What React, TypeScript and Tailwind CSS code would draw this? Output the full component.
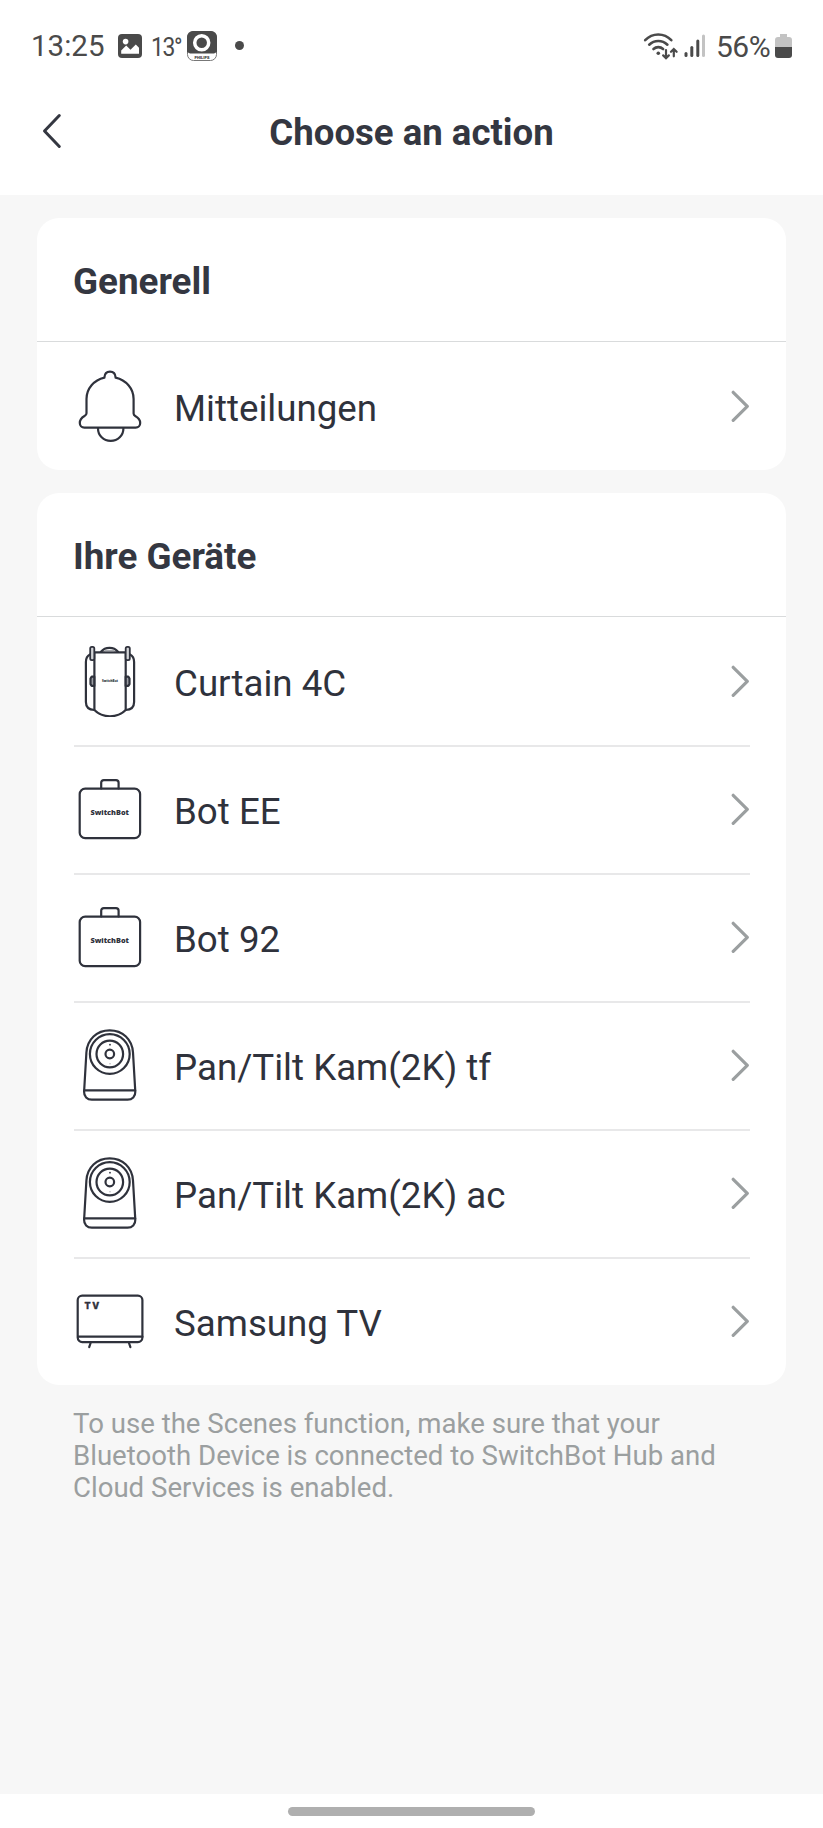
import type { ReactNode } from "react";

type RowProps = {
  icon: ReactNode;
  label: string;
  first?: boolean;
};

type Device = {
  label: string;
  icon: ReactNode;
};

function IconBox({ children }: { children: ReactNode }) {
  return (
    <svg
      viewBox="0 0 72 72"
      className="h-[72px] w-[72px] shrink-0"
      fill="none"
      stroke="#2f323c"
      strokeWidth="2.2"
      strokeLinecap="round"
      strokeLinejoin="round"
    >
      {children}
    </svg>
  );
}

function BellIcon() {
  return (
    <IconBox>
      <path d="M30.4 7.6C30.6 3.6 33 1.6 36 1.6s5.4 2 5.6 6C52 10 59.6 18.5 59.6 29v14.6c0 1.2.5 1.8 1.6 2.4 3.2 1.8 5 3.8 5 7 0 2.7-1.800 4.700-4.600 4.700H10.400c-2.800 0-4.600-2-4.600-4.700 0-3.200 1.500-5.200 4.700-7 1.300-.7 2-1.500 2-2.800V29C12.500 18.500 20 10 30.400 7.600Z" />
      <path d="M24 58.400c0 7 5.500 12.400 12.700 12.400s12.700-5.400 12.700-12.400" />
    </IconBox>
  );
}

function CurtainIcon() {
  return (
    <IconBox>
      <path d="M16 9.500c-2.500 1.300-4.100 4-4.100 7.500v40c0 4.700 3 7.800 8.400 8" />
      <path d="M56 9.500c2.500 1.300 4.100 4 4.100 7.500v40c0 4.700-3 7.800-8.400 8" />
      <path d="M20.400 7.400h31.300V65c-4 4-9.500 6.300-15.700 6.300S24.400 69 20.400 65Z" />
      <path d="M27 6.800c2.200-2.700 5-3.900 8.500-3.900s6.300 1.200 8.500 3.900" />
      <path d="M31 5.800h9" stroke="#8b8d93" strokeWidth="1.200" />
      <rect x="16.200" y="1.800" width="4.100" height="13.300" rx="1.600" fill="#d4d5d8" strokeWidth="1.800" />
      <rect x="51.700" y="1.800" width="4.100" height="13.300" rx="1.600" fill="#d4d5d8" strokeWidth="1.800" />
      <path d="M20.300 31.700h-2.600l-1.200 1.800v5.600l1.200 1.800h2.600ZM51.700 31.700h2.600l1.200 1.800v5.600l-1.200 1.800h-2.600Z" fill="#9b9da3" />
      <text
        x="36"
        y="37.200"
        textAnchor="middle"
        textLength="16"
        lengthAdjust="spacingAndGlyphs"
        fill="#2f323c"
        stroke="none"
        fontFamily="Open Sans, sans-serif"
        fontSize="3"
        fontWeight="800"
      >
        SwitchBot
      </text>
    </IconBox>
  );
}

function BotIcon() {
  return (
    <IconBox>
      <rect x="5.700" y="15.600" width="60.400" height="49.600" rx="5.500" />
      <path d="M27.200 15.400V9.800c0-1.600 1-2.600 2.600-2.600h12.200c1.600 0 2.600 1 2.600 2.600v5.600" />
      <text
        x="35.700"
        y="41.700"
        textAnchor="middle"
        textLength="38.500"
        lengthAdjust="spacingAndGlyphs"
        fill="#2f323c"
        stroke="none"
        fontFamily="Open Sans, sans-serif"
        fontSize="7.600"
        fontWeight="800"
      >
        SwitchBot
      </text>
    </IconBox>
  );
}

function CameraIcon() {
  return (
    <IconBox>
      <path d="M12.400 23.500C13.200 10.500 22.800 1.400 35.700 1.400S58.200 10.500 59 23.500l2.300 39.300c.2 4.600-3 7.900-7.700 7.900H17.800c-4.700 0-7.900-3.300-7.700-7.900Z" />
      <path d="M10.200 61.400h51" />
      <circle cx="35.800" cy="25" r="19.900" />
      <circle cx="35.800" cy="25" r="13.300" />
      <circle cx="35.800" cy="25" r="4.300" />
      <circle cx="36" cy="15.700" r=".9" fill="#2f323c" stroke="none" />
      <circle cx="36" cy="34.700" r=".7" fill="#a5a7ab" stroke="none" />
    </IconBox>
  );
}

function TvIcon() {
  return (
    <IconBox>
      <rect x="3.700" y="10.600" width="64.700" height="46.500" rx="4.500" />
      <path d="M4 51.700h64.400M16.600 58l-1.400 4.200M55 58l1.400 4.200" />
      <text
        x="10.600"
        y="24.100"
        letterSpacing="1.600"
        fill="#2f323c"
        stroke="#2f323c"
        strokeWidth=".4"
        fontFamily="Inter, sans-serif"
        fontSize="9"
        fontWeight="800"
      >
        TV
      </text>
    </IconBox>
  );
}

const devices: Device[] = [
  { label: "Curtain 4C", icon: <CurtainIcon /> },
  { label: "Bot EE", icon: <BotIcon /> },
  { label: "Bot 92", icon: <BotIcon /> },
  { label: "Pan/Tilt Kam(2K) tf", icon: <CameraIcon /> },
  { label: "Pan/Tilt Kam(2K) ac", icon: <CameraIcon /> },
  { label: "Samsung TV", icon: <TvIcon /> },
];

function Row({ icon, label, first }: RowProps) {
  return (
    <button
      type="button"
      className={`ml-[37px] mr-9 flex h-32 items-center text-left ${first ? "" : "border-t-2 border-[#e8e8e9] pb-0.5"}`}
    >
      {icon}
      <span className="ml-7 flex-1 pt-1.5 text-[36.7px] leading-[42px] text-[#2f323c]">{label}</span>
      <svg viewBox="0 0 20 32" className="h-8 w-5 shrink-0" fill="none" stroke="#9b9fa0" strokeWidth="3.2" strokeLinecap="round" strokeLinejoin="round">
        <path d="M3.200 2.300 17.300 16.300 3.200 30.300" />
      </svg>
    </button>
  );
}

function Card({ title, children }: { title: string; children: ReactNode }) {
  return (
    <section className="flex flex-col rounded-[22px] bg-white">
      <h2 className="flex h-[124px] items-center border-b border-[#d9dbdc] px-[36px] pt-1 text-[36.8px] font-bold leading-[42px] text-[#343741]">
        {title}
      </h2>
      {children}
    </section>
  );
}

function StatusBar() {
  return (
    <div className="flex h-[91px] items-center pl-[31px] pr-[31px] text-[#4a4a4a]">
      <span className="w-[87px] pt-0.5 text-[29.5px] leading-none">13:25</span>
      <svg viewBox="0 0 24 24" className="h-6 w-6">
        <rect width="24" height="24" rx="4" fill="#4a4a4a" />
        <circle cx="7.600" cy="7.600" r="2.800" fill="#fff" />
        <path d="M3.200 19.800v-3.300l5-5 4.300 4.200 5.300-5.300 3.200 3.300v6.100Z" fill="#fff" />
      </svg>
      <span className="ml-[9px] w-9 origin-left scale-x-[0.88] whitespace-nowrap pt-0.5 text-[26px] leading-none tracking-[-1.5px]">13°</span>
      <svg viewBox="0 0 30 30" className="h-[30px] w-[30px]">
        <rect x=".5" y=".5" width="29" height="29" rx="6" fill="#fff" stroke="#777" />
        <path d="M6 0h18a6 6 0 0 1 6 6v15l-3 1.500H3L0 21V6a6 6 0 0 1 6-6Z" fill="#4a4a4a" />
        <circle cx="14.700" cy="11.800" r="7" fill="none" stroke="#fff" strokeWidth="3.500" />
        <text x="15" y="27.800" textAnchor="middle" textLength="15" lengthAdjust="spacingAndGlyphs" fontFamily="Roboto, sans-serif" fontSize="4" fontWeight="900" fill="#333">
          PHILIPS
        </text>
      </svg>
      <span className="ml-[18px] h-[9px] w-[9px] rounded-full bg-[#4a4a4a]" />
      <div className="ml-auto flex items-center">
        <svg viewBox="0 0 36 30" className="h-[30px] w-9" fill="none" stroke="#4a4a4a" strokeWidth="2.6" strokeLinecap="round">
          <path d="M3.200 9.200C10.500 1.500 22 1.500 29.300 9.200" />
          <path d="M7.200 13.700c5.200-5 13-5 18.200 0" />
          <path d="M11.500 18c2.700-2.500 6.900-2.500 9.600 0" />
          <circle cx="16.300" cy="22.300" r="1.800" fill="#4a4a4a" stroke="none" />
          <path d="M24 19v8M21.200 24.400l2.800 2.800 2.800-2.800M31.800 25.300v-7.300M29 20.800l2.800-2.800 2.800 2.800" strokeWidth="2.200" />
        </svg>
        <svg viewBox="0 0 22 24" className="ml-[6px] h-6 w-[22px]">
          <rect x=".5" y="18" width="3" height="5" rx="1.500" fill="#4a4a4a" />
          <rect x="6.300" y="12" width="3" height="11" rx="1.500" fill="#4a4a4a" />
          <rect x="12.300" y="5.500" width="3" height="17.500" rx="1.500" fill="#4a4a4a" />
          <rect x="18" y=".5" width="3" height="22.500" rx="1.500" fill="#c3c3c3" />
        </svg>
        <span className="ml-[10px] w-[59px] whitespace-nowrap pt-0.5 text-[30px] leading-none tracking-[-0.5px]">56%</span>
        <svg viewBox="0 0 17 24" className="h-6 w-[17px]">
          <path d="M5 0h7v3h2a3 3 0 0 1 3 3v8H0V6a3 3 0 0 1 3-3h2Z" fill="#c3c3c3" />
          <path d="M0 13h17v8a3 3 0 0 1-3 3H3a3 3 0 0 1-3-3Z" fill="#4a4a4a" />
        </svg>
      </div>
    </div>
  );
}

export default function App() {
  return (
    <div className="flex h-[1828px] w-[823px] flex-col bg-[#f7f7f7] font-[Roboto,sans-serif]">
      <header className="h-[195px] bg-white">
        <StatusBar />
        <div className="flex h-20 items-center pl-[42px] pr-[41px]">
          <svg viewBox="0 0 20 36" className="h-9 w-5" fill="none" stroke="#343741" strokeWidth="3" strokeLinecap="round" strokeLinejoin="round">
            <path d="M17.300 2.500 2.500 18l14.800 15.500" />
          </svg>
          <h1 className="flex-1 pr-[21px] pt-1 text-center text-[36.6px] font-bold leading-[42px] text-[#343741]">Choose an action</h1>
        </div>
      </header>

      <main className="flex flex-1 flex-col gap-[23px] px-[37px] pt-[23px]">
        <Card title="Generell">
          <Row icon={<BellIcon />} label="Mitteilungen" first />
        </Card>
        <div>
          <Card title="Ihre Geräte">
            {devices.map((device, index) => (
              <Row key={device.label} icon={device.icon} label={device.label} first={index === 0} />
            ))}
          </Card>
          <p className="whitespace-nowrap px-[36px] pt-[23px] text-[27.6px] leading-8 text-[#9b9fa0]">
            To use the Scenes function, make sure that your
            <br />
            Bluetooth Device is connected to SwitchBot Hub and
            <br />
            Cloud Services is enabled.
          </p>
        </div>
      </main>

      <footer className="flex h-[34px] justify-center bg-white pt-[13px]">
        <div className="h-[9px] w-[247px] rounded-full bg-[#afafaf]" />
      </footer>
    </div>
  );
}
